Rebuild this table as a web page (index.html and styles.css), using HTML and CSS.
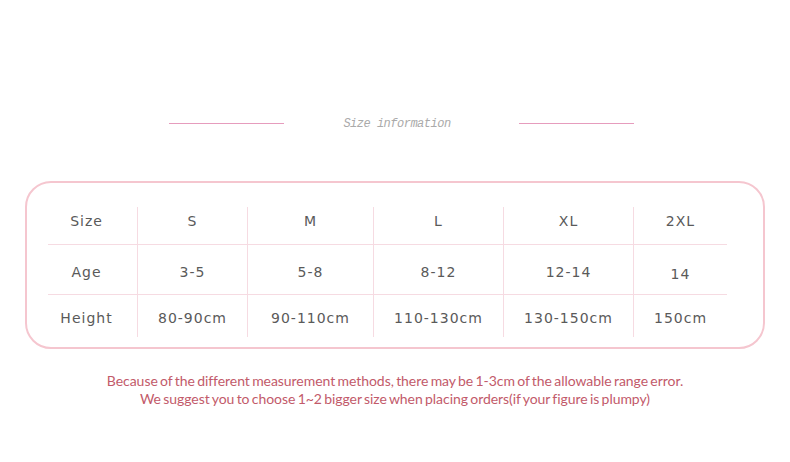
FILE: index.html
```html
<!DOCTYPE html>
<html>
<head>
<meta charset="utf-8">
<link rel="stylesheet" href="styles.css">
</head>
<body>
<div class="page">
  <div class="title-row">
    <span class="rule"></span>
    <span class="title">Size information</span>
    <span class="rule"></span>
  </div>
  <div class="box">
    <div class="table">
      <div class="cell head first">Size</div>
      <div class="cell head">S</div>
      <div class="cell head">M</div>
      <div class="cell head">L</div>
      <div class="cell head">XL</div>
      <div class="cell head">2XL</div>

      <div class="cell mid first">Age</div>
      <div class="cell mid">3-5</div>
      <div class="cell mid">5-8</div>
      <div class="cell mid">8-12</div>
      <div class="cell mid">12-14</div>
      <div class="cell mid low">14</div>

      <div class="cell last first">Height</div>
      <div class="cell last">80-90cm</div>
      <div class="cell last">90-110cm</div>
      <div class="cell last">110-130cm</div>
      <div class="cell last">130-150cm</div>
      <div class="cell last">150cm</div>
    </div>
  </div>
  <div class="note">
    <p>Because of the different measurement methods, there may be 1-3cm of the allowable range error.</p>
    <p>We suggest you to choose 1~2 bigger size when placing orders(if your figure is plumpy)</p>
  </div>
</div>
</body>
</html>
```
FILE: styles.css
```css
html, body {
  margin: 0;
  padding: 0;
  background: #ffffff;
}
.page {
  width: 790px;
  height: 462px;
  padding-top: 114px;
  box-sizing: border-box;
}
.title-row {
  display: flex;
  align-items: center;
  justify-content: center;
  height: 19px;
  padding-left: 12px;
  margin-bottom: -1px;
}
.rule {
  display: block;
  width: 115px;
  height: 1px;
  background: #e69cbd;
}
.title {
  width: 227px;
  padding-right: 8px;
  text-align: center;
  font-family: "Liberation Mono", monospace;
  font-style: italic;
  font-size: 12px;
  letter-spacing: -0.5px;
  color: #aaaaaa;
}
.box {
  margin: 49px 25px 0 25px;
  height: 168px;
  box-sizing: border-box;
  border: 2px solid #f5c6cf;
  border-radius: 26px;
  padding: 24px 36px 0 21px;
}
.table {
  display: grid;
  grid-template-columns: 89px 110px 126px 130px 130px 94px;
  grid-template-rows: 38px 50px 42px;
  font-family: "DejaVu Sans", sans-serif;
  font-size: 14px;
  letter-spacing: 1px;
  color: #5a5a5a;
}
.cell {
  display: flex;
  justify-content: center;
  align-items: center;
  border-left: 1px solid #f6dbe2;
  box-sizing: border-box;
}
.cell.first {
  border-left: none;
  padding-right: 12px;
}
.head {
  border-bottom: 1px solid #f6dbe2;
  padding-bottom: 9px;
}
.mid {
  border-bottom: 1px solid #f6dbe2;
  padding-top: 4px;
}
.mid.low {
  padding-top: 8px;
}
.last {
  padding-top: 3px;
}
.note {
  margin-top: 23px;
  text-align: center;
  font-family: "Lato", sans-serif;
  font-size: 14px;
  line-height: 18px;
  letter-spacing: -0.05px;
  word-spacing: -1.2px;
  color: #c25a6a;
}
.note p {
  margin: 0;
}
```
